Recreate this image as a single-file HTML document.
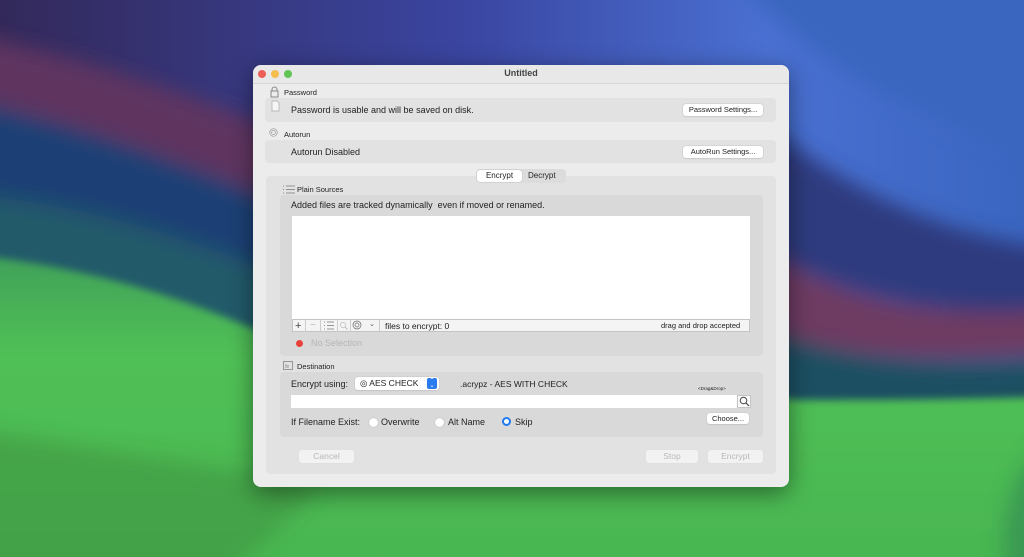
<!DOCTYPE html>
<html><head><meta charset="utf-8"><style>
*{box-sizing:border-box;margin:0;padding:0}
html,body{width:1024px;height:557px;overflow:hidden}
body{position:relative;font-family:"Liberation Sans",sans-serif;color:#222;background:#3a3f8a}
.a{position:absolute}
.bg{left:0;top:0;width:1024px;height:557px;overflow:hidden}
.win{left:253px;top:65px;width:536px;height:422px;background:#ececec;border-radius:8px;box-shadow:0 6px 24px rgba(0,0,0,.45);overflow:hidden}
.t{font-size:9px;white-space:nowrap;line-height:1}
.s{font-size:7.5px;white-space:nowrap;line-height:1}
.box{background:#e2e2e2;border-radius:4px}
.btn{background:#fff;border-radius:3px;box-shadow:0 0 0 .5px #c8c8c8,0 1px 1px rgba(0,0,0,.1);font-size:7.5px;text-align:center;line-height:12px}
.dis{background:#f2f2f2;color:#b8b8b8;font-size:8.5px;line-height:13px;box-shadow:0 0 0 .5px #ddd}
.radio{width:9px;height:9px;border-radius:50%;background:#fff;box-shadow:0 0 0 .5px #bbb}
</style></head><body>
<div class="a bg">
<svg style="display:block;overflow:hidden" width="1024" height="557" viewBox="0 0 1024 557">
<defs>
<linearGradient id="g1" x1="0" y1="0" x2="1" y2="0"><stop offset="0" stop-color="#33295a"/><stop offset=".45" stop-color="#3a45a0"/><stop offset=".75" stop-color="#4a70d2"/><stop offset="1" stop-color="#3a66c0"/></linearGradient>
<linearGradient id="gg" x1="0" y1="0" x2="0" y2="1"><stop offset="0" stop-color="#3f9e5a"/><stop offset=".3" stop-color="#50c055"/><stop offset="1" stop-color="#48b450"/></linearGradient>
<filter id="b" x="-20%" y="-20%" width="140%" height="140%"><feGaussianBlur stdDeviation="10"/></filter>
<filter id="b2" x="-20%" y="-20%" width="140%" height="140%"><feGaussianBlur stdDeviation="4"/></filter>
</defs>
<rect width="1024" height="557" fill="url(#g1)"/>
<g filter="url(#b)">
<path d="M-80 25 C100 55 220 110 340 150 L340 230 C220 190 100 145 -80 105Z" fill="#5e3660"/>
<path d="M-80 90 C100 125 220 180 340 225 L340 330 L-80 330Z" fill="#1d3f74"/>
<path d="M-80 190 C100 200 220 250 340 300 L340 360 L-80 360Z" fill="#245a6a"/>
<path d="M700 -60 C800 60 900 120 1100 180 L1100 -60Z" fill="#3a66c0"/>
<path d="M760 120 C850 190 940 240 1100 255 L1100 320 C940 315 850 300 760 250Z" fill="#2f3b7e"/>
<path d="M770 255 C850 300 940 325 1100 305 L1100 350 C940 365 850 360 770 330Z" fill="#6e3a62"/>
<path d="M770 330 C850 360 940 370 1100 355 L1100 420 L770 420Z" fill="#1f5062"/>
</g>
<g filter="url(#b2)">
<path d="M-80 250 C100 262 220 310 320 360 L800 400 C880 400 960 400 1100 395 L1100 600 L-80 600Z" fill="url(#gg)"/>
</g>
<g filter="url(#b)">
<path d="M-80 420 C150 460 260 470 320 490 L200 600 L-80 600Z" fill="#3b8d3e" opacity=".5"/>
<path d="M1100 420 C1020 440 990 500 1010 600 L1100 600Z" fill="#2e7a52" opacity=".5"/>
</g>
</svg>
</div>
<div class="a win">
<div class="a" style="left:0;top:0;width:536px;height:19px;background:#e8e8e8;border-bottom:1px solid #d6d6d6"></div>
<div class="a" style="left:5px;top:5px;width:8px;height:8px;border-radius:50%;background:#ec5f56"></div>
<div class="a" style="left:18px;top:5px;width:8px;height:8px;border-radius:50%;background:#f4bd4f"></div>
<div class="a" style="left:31px;top:5px;width:8px;height:8px;border-radius:50%;background:#5fc454"></div>
<div class="a t" style="left:0;width:536px;top:4px;text-align:center;font-weight:bold;color:#444">Untitled</div>
<svg class="a" style="left:17px;top:21px" width="9" height="12"><path d="M2 5V3.5a2.5 2.5 0 0 1 5 0V5" fill="none" stroke="#888"/><rect x="1" y="5" width="7" height="6" fill="none" stroke="#888"/></svg>
<div class="a s" style="left:31px;top:24px">Password</div>
<div class="a box" style="left:12px;top:33px;width:511px;height:24px"></div>
<svg class="a" style="left:18px;top:35px" width="9" height="12"><path d="M1 1h5l2 2v8H1z" fill="#f6f6f6" stroke="#aaa" stroke-width=".7"/></svg>
<div class="a t" style="left:38px;top:41px">Password is usable and will be saved on disk.</div>
<div class="a btn" style="left:430px;top:39px;width:80px;height:12px">Password Settings...</div>
<svg class="a" style="left:16px;top:63px" width="9" height="9"><circle cx="4.5" cy="4.5" r="3.8" fill="none" stroke="#999" stroke-width=".7"/><circle cx="4.5" cy="4.5" r="2" fill="none" stroke="#999" stroke-width=".7"/></svg>
<div class="a s" style="left:31px;top:66px">Autorun</div>
<div class="a box" style="left:12px;top:75px;width:511px;height:23px"></div>
<div class="a t" style="left:38px;top:83px">Autorun Disabled</div>
<div class="a btn" style="left:430px;top:81px;width:80px;height:12px">AutoRun Settings...</div>
<div class="a box" style="left:13px;top:111px;width:510px;height:298px"></div>
<div class="a" style="left:223px;top:104px;width:90px;height:14px;background:#dcdcdc;border-radius:4px"></div>
<div class="a btn" style="left:224px;top:105px;width:45px;height:12px;font-size:8px;box-shadow:0 0 1px rgba(0,0,0,.3)">Encrypt</div>
<div class="a t" style="left:275px;top:107px;font-size:8px">Decrypt</div>
<svg class="a" style="left:30px;top:120px" width="12" height="9"><g stroke="#777" stroke-width=".7"><path d="M0 1h1M0 4.5h1M0 8h1M3 1h9M3 4.5h9M3 8h9"/></g></svg>
<div class="a s" style="left:44px;top:121px">Plain Sources</div>
<div class="a" style="left:27px;top:130px;width:483px;height:161px;background:#d9d9d9;border-radius:4px"></div>
<div class="a t" style="left:38px;top:136px">Added files are tracked dynamically &nbsp;even if moved or renamed.</div>
<div class="a" style="left:39px;top:151px;width:458px;height:103px;background:#fff"></div>
<div class="a" style="left:39px;top:254px;width:458px;height:13px;background:#f4f4f4;border:1px solid #c4c4c4"></div>
<div class="a t" style="left:42px;top:256px;font-size:11px;color:#444">+</div>
<div class="a t" style="left:57px;top:256px;font-size:10px;color:#bbb">−</div>
<svg class="a" style="left:70px;top:256px" width="12" height="9"><g stroke="#777" stroke-width=".7"><path d="M1 1h1M1 4.5h1M1 8h1M4 1h7M4 4.5h7M4 8h7"/></g></svg>
<svg class="a" style="left:86px;top:256px" width="9" height="9"><circle cx="4" cy="4" r="2.6" fill="none" stroke="#bbb" stroke-width=".7"/><path d="M6 6l2.5 2.5" stroke="#bbb"/></svg>
<svg class="a" style="left:99px;top:255px" width="10" height="10"><circle cx="5" cy="5" r="4" fill="none" stroke="#666" stroke-width=".7"/><circle cx="5" cy="5" r="2" fill="none" stroke="#666" stroke-width=".7"/></svg>
<div class="a t" style="left:116px;top:256px;font-size:7px;color:#555">⌄</div>
<div class="a" style="left:52px;top:255px;width:1px;height:12px;background:#ccc"></div>
<div class="a" style="left:67px;top:255px;width:1px;height:12px;background:#ccc"></div>
<div class="a" style="left:84px;top:255px;width:1px;height:12px;background:#ccc"></div>
<div class="a" style="left:97px;top:255px;width:1px;height:12px;background:#ccc"></div>
<div class="a" style="left:126px;top:255px;width:1px;height:12px;background:#ccc"></div>
<div class="a t" style="left:132px;top:257px;font-size:8.5px">files to encrypt: 0</div>
<div class="a s" style="left:408px;top:257px">drag and drop accepted</div>
<div class="a" style="left:43px;top:275px;width:7px;height:7px;border-radius:50%;background:#e8413a"></div>
<div class="a t" style="left:58px;top:274px;color:#b5b5b5">No Selection</div>
<svg class="a" style="left:30px;top:295px" width="10" height="10"><rect x=".5" y="1.5" width="9" height="8" fill="none" stroke="#777" stroke-width=".7"/><path d="M3 4v4M5 5v3" stroke="#777" stroke-width=".7"/></svg>
<div class="a s" style="left:44px;top:298px">Destination</div>
<div class="a" style="left:27px;top:307px;width:483px;height:65px;background:#d9d9d9;border-radius:4px"></div>
<div class="a t" style="left:38px;top:315px">Encrypt using:</div>
<div class="a btn" style="left:102px;top:312px;width:84px;height:13px;text-align:left;padding-left:5px;font-size:8.5px;line-height:13px">◎ AES CHECK</div>
<div class="a" style="left:174px;top:313px;width:10px;height:11px;background:#2a7bf0;border-radius:2px;color:#fff;font-size:6px;line-height:5px;text-align:center;padding-top:1px">⌃<br>⌄</div>
<div class="a t" style="left:207px;top:315px;font-size:8.5px">.acrypz - AES WITH CHECK</div>
<div class="a" style="left:445px;top:321px;font-size:4.5px;white-space:nowrap">&lt;Drag&amp;Drop&gt;</div>
<div class="a" style="left:38px;top:330px;width:447px;height:13px;background:#fff"></div>
<div class="a" style="left:484px;top:330px;width:14px;height:13px;background:#fafafa;border:1px solid #c4c4c4"></div>
<svg class="a" style="left:486px;top:331px" width="11" height="11"><circle cx="4.5" cy="4.5" r="3.3" fill="none" stroke="#444" stroke-width="1"/><path d="M7 7l3 3" stroke="#444" stroke-width="1.2"/></svg>
<div class="a t" style="left:38px;top:353px">If Filename Exist:</div>
<div class="a radio" style="left:116px;top:353px"></div>
<div class="a t" style="left:128px;top:353px">Overwrite</div>
<div class="a radio" style="left:182px;top:353px"></div>
<div class="a t" style="left:195px;top:353px">Alt Name</div>
<div class="a radio" style="left:249px;top:352px;background:#fff;border:2.7px solid #1f78f0;box-shadow:none"></div>
<div class="a t" style="left:262px;top:353px">Skip</div>
<div class="a btn" style="left:454px;top:348px;width:42px;height:11px;line-height:11px">Choose...</div>
<div class="a btn dis" style="left:46px;top:385px;width:55px;height:13px">Cancel</div>
<div class="a btn dis" style="left:393px;top:385px;width:52px;height:13px">Stop</div>
<div class="a btn dis" style="left:455px;top:385px;width:55px;height:13px">Encrypt</div>
</div>
</body></html>
